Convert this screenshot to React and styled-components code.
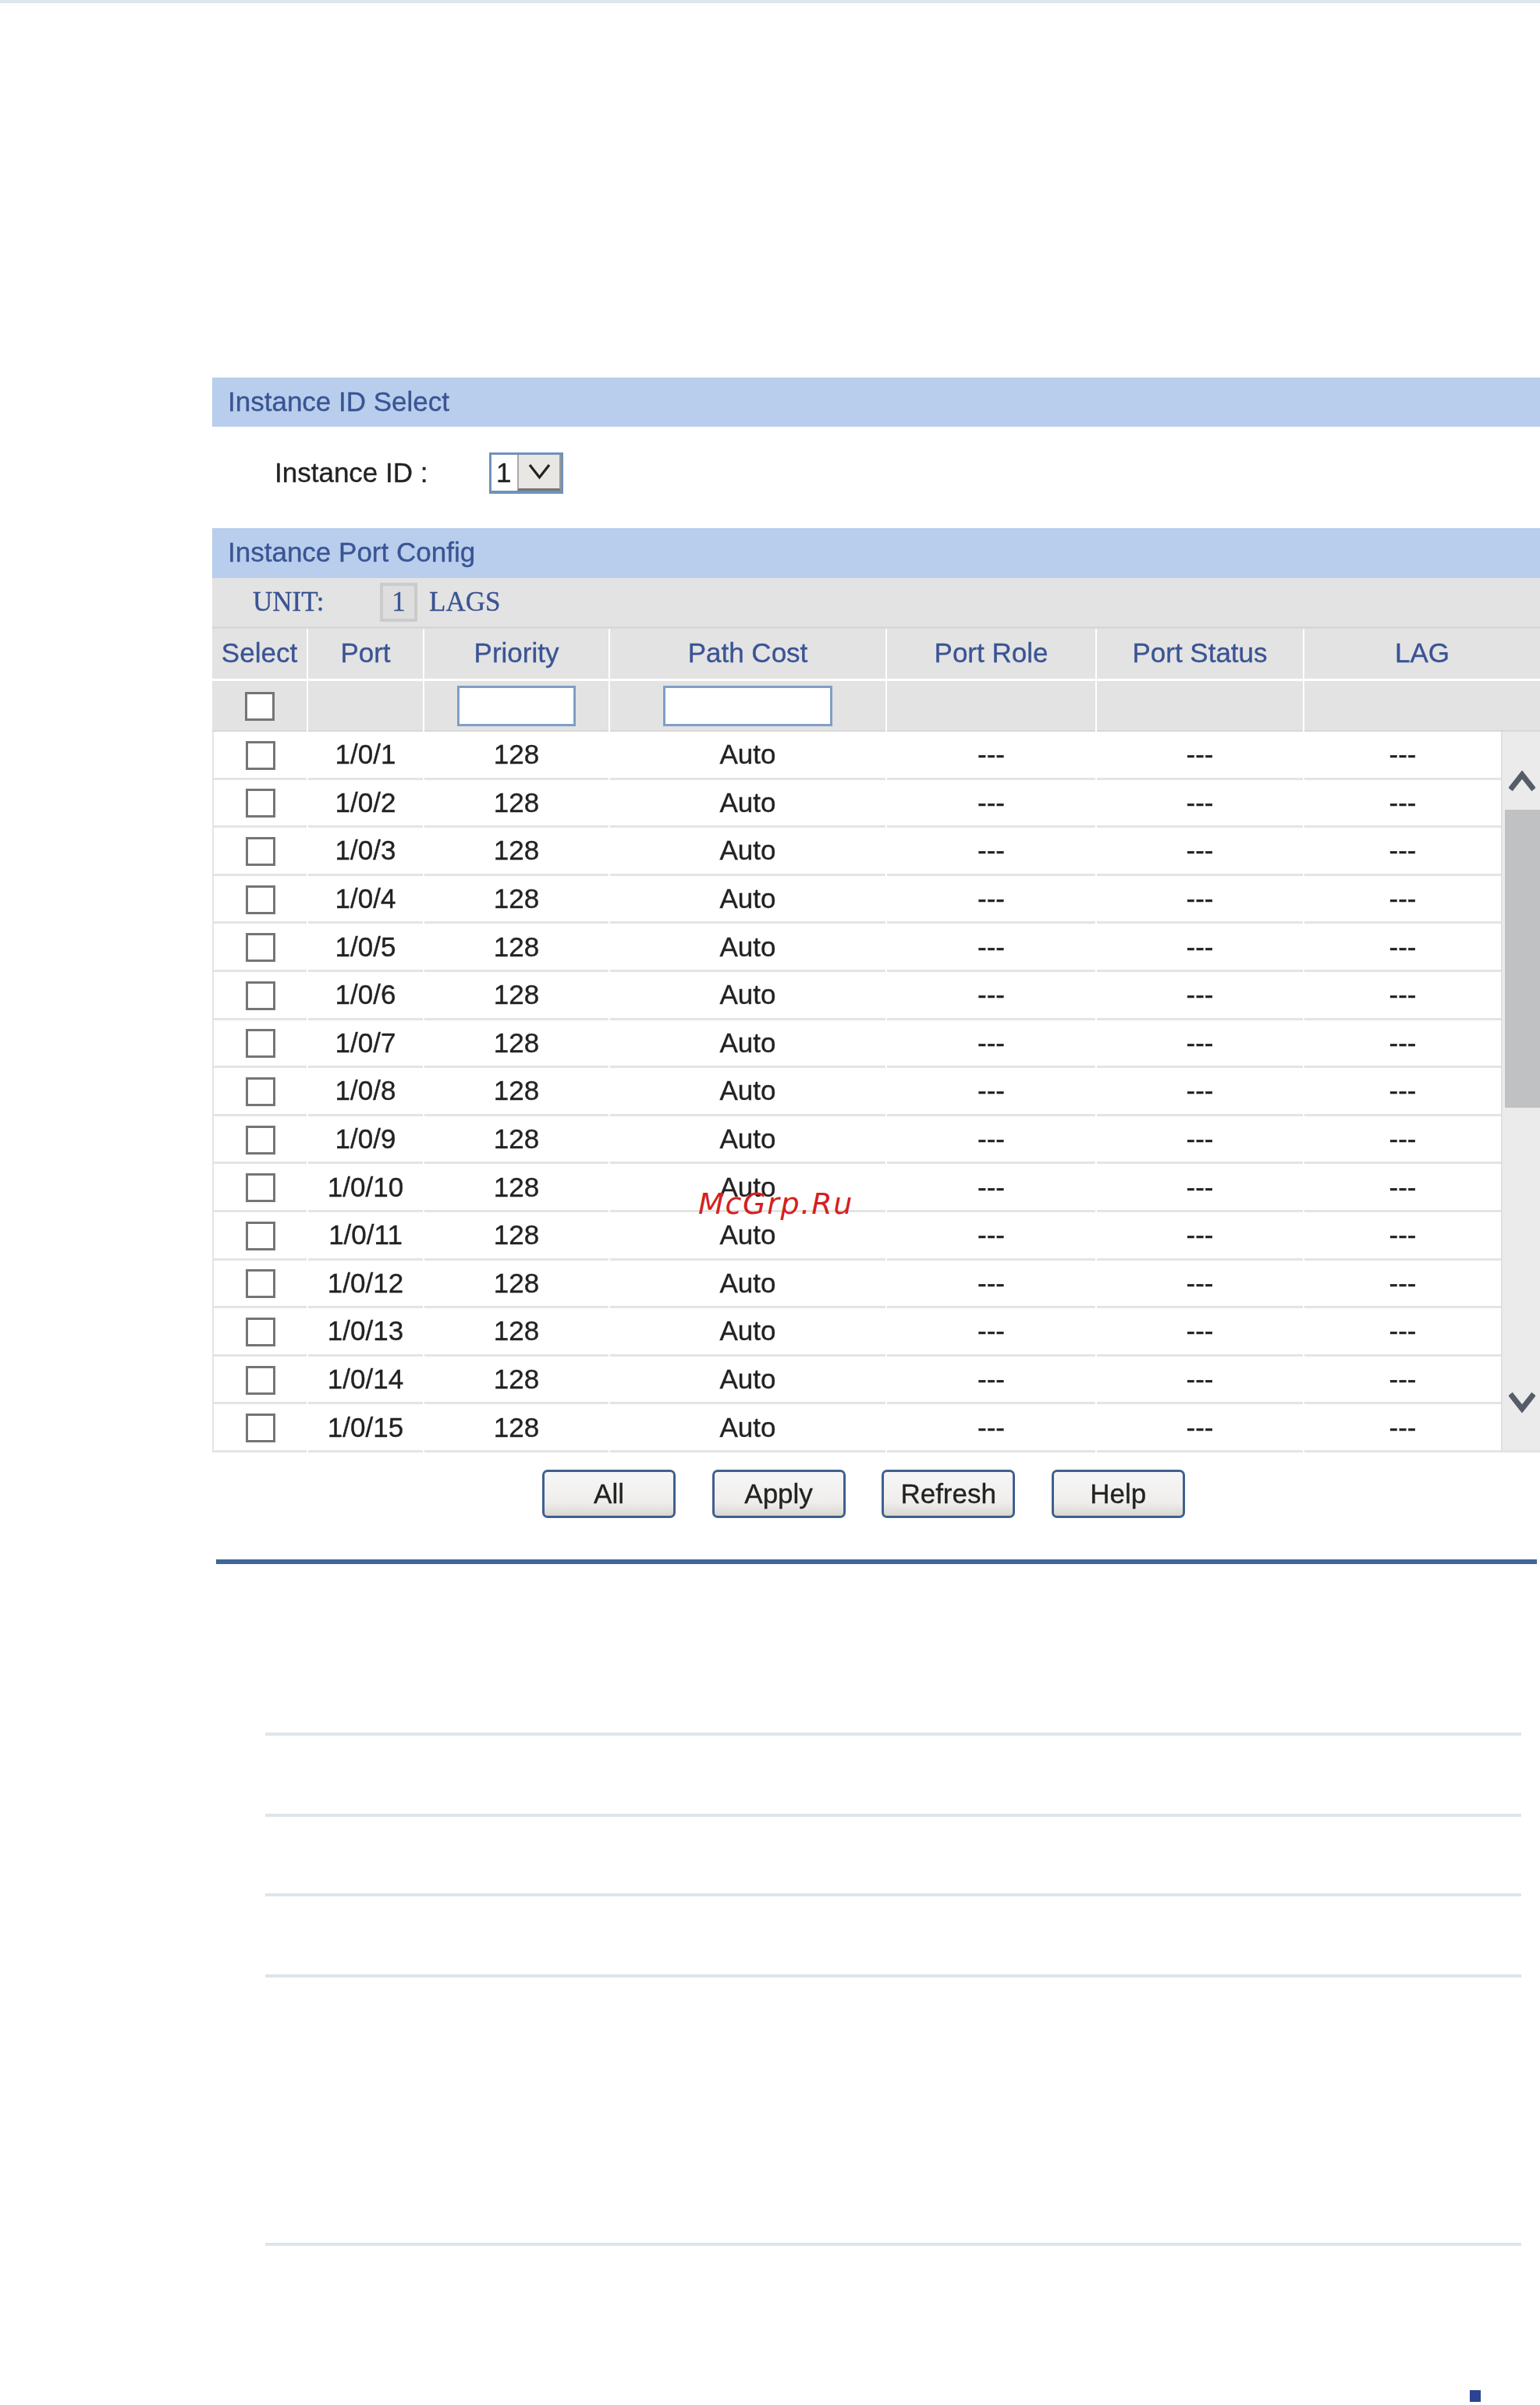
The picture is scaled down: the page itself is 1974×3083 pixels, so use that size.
import React from 'react';
import styled, { createGlobalStyle } from 'styled-components';

const ports = Array.from({ length: 15 }, (_, i) => `1/0/${i + 1}`);

const App = () => (
  <Page>
    <GlobalStyle />
    <TopLine />
    <Panel>
      <Bar $height={63}>Instance ID Select</Bar>
      <SelectRow>
        <FieldLabel>Instance ID :</FieldLabel>
        <Dropdown>
          <DropdownValue>1</DropdownValue>
          <DropdownButton>
            <svg width="29" height="21" viewBox="0 0 29 21">
              <path d="M2 2 L14.5 18 L27 2" fill="none" stroke="#222" strokeWidth="3.2" />
            </svg>
          </DropdownButton>
        </Dropdown>
      </SelectRow>

      <Bar $height={64}>Instance Port Config</Bar>
      <UnitRow>
        <UnitLabel>UNIT:</UnitLabel>
        <UnitBox>1</UnitBox>
        <LagsLabel>LAGS</LagsLabel>
      </UnitRow>

      <HeadRow>
        <HeadCell>Select</HeadCell>
        <HeadCell>Port</HeadCell>
        <HeadCell>Priority</HeadCell>
        <HeadCell>Path Cost</HeadCell>
        <HeadCell>Port Role</HeadCell>
        <HeadCell>Port Status</HeadCell>
        <HeadCell>LAG</HeadCell>
      </HeadRow>
      <FilterRow>
        <FilterCell><Check type="checkbox" /></FilterCell>
        <FilterCell />
        <FilterCell><FilterInput $width={152} /></FilterCell>
        <FilterCell><FilterInput $width={217} /></FilterCell>
        <FilterCell />
        <FilterCell />
        <FilterCell />
      </FilterRow>

      <TableBody>
        <Rows>
          {ports.map((port) => (
            <Row key={port}>
              <Cell><Check type="checkbox" /></Cell>
              <Cell>{port}</Cell>
              <Cell>128</Cell>
              <Cell>Auto</Cell>
              <Cell>---</Cell>
              <Cell>---</Cell>
              <Cell>---</Cell>
            </Row>
          ))}
        </Rows>
        <Scrollbar>
          <ScrollUp viewBox="0 0 34 27">
            <path d="M2 24 L17 5 L32 24" fill="none" stroke="#565d68" strokeWidth="7" />
          </ScrollUp>
          <Thumb />
          <ScrollDown viewBox="0 0 34 27">
            <path d="M2 3 L17 22 L32 3" fill="none" stroke="#565d68" strokeWidth="7" />
          </ScrollDown>
        </Scrollbar>
      </TableBody>

      <Buttons>
        <Button>All</Button>
        <Button>Apply</Button>
        <Button>Refresh</Button>
        <Button>Help</Button>
      </Buttons>
      <BlueRule />
    </Panel>

    <Notes>
      <NoteLine $top={216} />
      <NoteLine $top={100} />
      <NoteLine $top={98} />
      <NoteLine $top={100} />
      <NoteLine $top={340} />
    </Notes>
    <PageMark />
    <Watermark>McGrp.Ru</Watermark>
  </Page>
);

export default App;

const GlobalStyle = createGlobalStyle`
  html, body {
    margin: 0;
    background: #fff;
  }
  * {
    box-sizing: border-box;
  }
`;

const Page = styled.div`
  position: relative;
  width: 1974px;
  height: 3083px;
  overflow: hidden;
  padding-left: 272px;
  font-family: "Liberation Sans", Arial, sans-serif;
  font-size: 35px;
  color: #222;
`;

const TopLine = styled.div`
  height: 4px;
  margin: 0 0 480px -272px;
  background: #dce6ec;
`;

const Panel = styled.div`
  width: 1702px;
  filter: blur(0.7px);
  -webkit-text-stroke: 0.35px;
`;

const Bar = styled.div`
  height: ${(p) => p.$height}px;
  padding-left: 20px;
  line-height: 61px;
  background: #b8ceec;
  color: #3a5494;
`;

const SelectRow = styled.div`
  display: flex;
  align-items: center;
  height: 130px;
  padding: 0 0 12px 80px;
`;

const FieldLabel = styled.div`
  width: 275px;
`;

const Dropdown = styled.div`
  display: flex;
  width: 95px;
  height: 53px;
  border: 3px solid #6f92bb;
  border-bottom-width: 4px;
  background: #fff;
`;

const DropdownValue = styled.div`
  width: 33px;
  padding-left: 6px;
  line-height: 46px;
`;

const DropdownButton = styled.div`
  display: flex;
  flex: 1;
  align-items: center;
  justify-content: center;
  background: #e8e7e3;
  border-left: 2px solid #aaa;
  border-right: 2px solid #999;
  border-bottom: 3px solid #777;
`;

const UnitRow = styled.div`
  display: flex;
  align-items: center;
  height: 65px;
  padding-left: 52px;
  background: #e3e3e3;
  border-bottom: 3px solid #d8d8d8;
  font-family: "Liberation Serif", "Times New Roman", serif;
  color: #3a5494;
`;

const UnitLabel = styled.div`
  width: 163px;
`;

const UnitBox = styled.div`
  width: 48px;
  height: 50px;
  margin-right: 15px;
  line-height: 42px;
  text-align: center;
  background: #dedede;
  border: 4px solid #cbcbcb;
`;

const LagsLabel = styled.div``;

const HeadRow = styled.div`
  display: grid;
  grid-template-columns: 121px 147px 236px 353px 267px 264px 1fr;
  column-gap: 2px;
  height: 64px;
`;

const HeadCell = styled.div`
  line-height: 62px;
  text-align: center;
  background: #e3e3e3;
  color: #3a5494;
`;

const FilterRow = styled(HeadRow)`
  height: 65px;
  margin-top: 3px;
`;

const FilterCell = styled.div`
  display: flex;
  align-items: center;
  justify-content: center;
  background: #e3e3e3;
  border-bottom: 2px solid #d8d8d8;
`;

const FilterInput = styled.input`
  width: ${(p) => p.$width}px;
  height: 52px;
  border: 3px solid #7f9fc4;
  background: #fff;
`;

const Check = styled.input`
  appearance: none;
  display: block;
  width: 38px;
  height: 37px;
  margin: 2px 0 0;
  border: 3px solid #757575;
  background: #fff;
`;

const TableBody = styled.div`
  display: flex;
  height: 924px;
  border-left: 2px solid #e4e4e4;
`;

const Rows = styled.div`
  display: grid;
  grid-auto-rows: 61.6px;
  width: 1650px;
`;

const Row = styled.div`
  display: grid;
  grid-template-columns: 119px 147px 236px 353px 267px 264px 1fr;
  column-gap: 2px;
`;

const Cell = styled.div`
  display: flex;
  align-items: center;
  justify-content: center;
  border-bottom: 3px solid #e4e4e4;
`;

const Scrollbar = styled.div`
  display: flex;
  flex-direction: column;
  width: 50px;
  background: #ebebeb;
  border-left: 2px solid #e0e0e0;
  border-bottom: 3px solid #e4e4e4;
`;

const ScrollUp = styled.svg`
  flex: none;
  width: 34px;
  height: 27px;
  margin: 50px 0 23px 8px;
`;

const Thumb = styled.div`
  flex: none;
  width: 45px;
  height: 382px;
  margin-left: 3px;
  background: #c0c1c3;
`;

const ScrollDown = styled(ScrollUp)`
  margin: 364px 0 0 8px;
`;

const Buttons = styled.div`
  display: flex;
  gap: 46.6px;
  padding: 22px 0 0 423px;
`;

const Button = styled.button`
  width: 171px;
  height: 62px;
  padding: 0;
  border: 3px solid #3f6090;
  border-radius: 7px;
  background: linear-gradient(#f6f6f6, #efeeec 70%, #d9d7d0);
  font: inherit;
  color: #222;
`;

const BlueRule = styled.div`
  width: 1693px;
  height: 6px;
  margin: 53px 0 0 5px;
  background: #3f6698;
`;

const Notes = styled.div`
  width: 1610px;
  margin-left: 68px;
`;

const NoteLine = styled.div`
  height: 4px;
  margin-top: ${(p) => p.$top}px;
  background: #dce6ec;
`;

const PageMark = styled.div`
  width: 14px;
  height: 15px;
  margin: 185px 0 0 1612px;
  background: #2b4394;
`;

const Watermark = styled.div`
  position: absolute;
  left: 895px;
  top: 1517px;
  font-family: "DejaVu Sans", sans-serif;
  font-style: italic;
  font-size: 38px;
  line-height: 52px;
  letter-spacing: 1.7px;
  color: #d42020;
`;
